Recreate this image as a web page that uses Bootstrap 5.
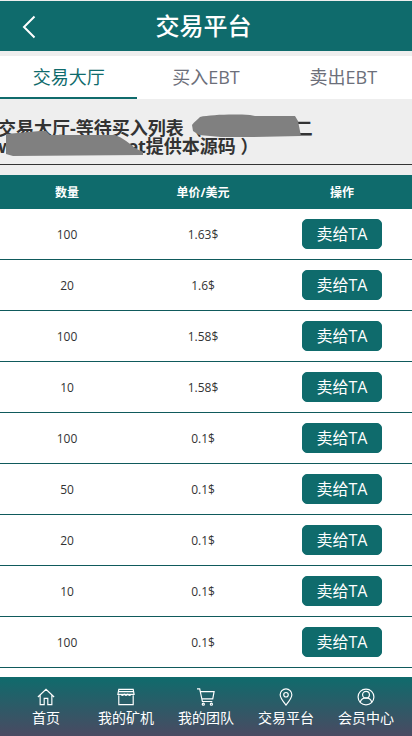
<!DOCTYPE html>
<html lang="zh"><head><meta charset="utf-8">
<meta name="viewport" content="width=device-width, initial-scale=1">
<link href="https://cdn.jsdelivr.net/npm/bootstrap@5.3.0/dist/css/bootstrap.min.css" rel="stylesheet">
<style>
html,body{height:736px;overflow:hidden}
body{font-family:"Open Sans","Noto Sans CJK SC",sans-serif;background:#eee;color:#333;padding-top:1px}
.topbar{height:50px;background:#0f6b6c;color:#fff;position:relative}
.topbar h1{font-size:24px;font-weight:500;margin:0;line-height:50px;text-align:center;padding-right:5px}
.backicon{position:absolute;left:22px;top:14px;width:14px;height:24px}
.tabbar{margin-top:5px;height:43px;background:#fff}
.tabitem{flex:1 1 0;text-align:center;font-size:18px;line-height:43px;color:#6c6f7a;height:43px;border-bottom:2px solid transparent}
.tabitem.on{color:#0f6b6c;border-bottom-color:#0f6b6c}
.notice{height:66px;border-bottom:1px solid #333;position:relative;overflow:hidden;padding-top:20px}
.notice p{font-size:18px;font-weight:700;line-height:18px;margin:0;color:#333;white-space:nowrap;margin-left:-2px}
.veil1{display:inline-block;width:93px}
.veil2{display:inline-block;width:114px}
.blob{position:absolute;left:0;top:0;width:412px;height:65px}
.tradegrid{margin-top:10px;margin-bottom:0;--bs-table-bg:transparent;background:#fff;table-layout:fixed;border-collapse:separate;border-spacing:0}
.tradegrid th{background:#0f6b6c;color:#fff;font-size:12px;font-weight:700;height:34px;padding:2px 0 0;vertical-align:middle;border:0;text-align:center}
.tradegrid th:nth-child(1){width:134px}
.tradegrid th:nth-child(2){width:138px}
.tradegrid td{height:51px;padding:2px 0 0;vertical-align:middle;text-align:center;font-size:12px;color:#333;border-bottom:1px solid #0f5a5c;background:#fff}
.tradegrid td:last-child{padding:0}
.sellbtn{--bs-btn-bg:#0f6b6c;--bs-btn-color:#fff;--bs-btn-border-color:#0f6b6c;--bs-btn-hover-bg:#0f6b6c;--bs-btn-hover-color:#fff;display:block;margin:0 auto;width:80px;height:30px;padding:0;font-size:16px;line-height:26px;border-radius:5px}
.gapfill{height:10px;background:#fff}
.dock{position:fixed;left:0;right:0;bottom:0;height:59px;background:linear-gradient(#0f6b6c,#4a4a62);color:#fff}
.dockitem{flex:0 0 80px;text-align:center;font-size:14px;line-height:17px;padding-top:11px}
.dockitem svg{display:block;margin:0 auto 3px;width:18px;height:18px}
.dockrow{padding-left:6px}
</style></head><body>
<header class="topbar">
<svg class="backicon" viewBox="0 0 14 24" fill="none" stroke="#fff" stroke-width="2"><path d="M12.5 1.500 2 12l10.500 10.500"/></svg>
<h1>交易平台</h1>
</header>
<nav class="tabbar d-flex">
<div class="tabitem on">交易大厅</div><div class="tabitem">买入EBT</div><div class="tabitem">卖出EBT</div>
</nav>
<section class="notice">
<p>交易大厅-等待买入列表（<span class="veil1"></span>二<br>w<span class="veil2"></span>et提供本源码 ）</p>
<svg class="blob" viewBox="0 0 412 65" fill="#808080"><path d="M192 26c2-3 6-6 8-8 10-2 30-3 50-2l5 1 40 0 3 5 3 15-50 1-30 0-22-2-6-4zM6 35l34-3 6 0 4 4 65 0c8 3 14 8 20 13l8 4v3l-130 1-7-2z"/></svg>
</section>
<table class="table tradegrid">
<thead><tr><th>数量</th><th>单价/美元</th><th>操作</th></tr></thead>
<tbody>
<tr><td>100</td><td>1.63$</td><td><button class="btn sellbtn">卖给TA</button></td></tr>
<tr><td>20</td><td>1.6$</td><td><button class="btn sellbtn">卖给TA</button></td></tr>
<tr><td>100</td><td>1.58$</td><td><button class="btn sellbtn">卖给TA</button></td></tr>
<tr><td>10</td><td>1.58$</td><td><button class="btn sellbtn">卖给TA</button></td></tr>
<tr><td>100</td><td>0.1$</td><td><button class="btn sellbtn">卖给TA</button></td></tr>
<tr><td>50</td><td>0.1$</td><td><button class="btn sellbtn">卖给TA</button></td></tr>
<tr><td>20</td><td>0.1$</td><td><button class="btn sellbtn">卖给TA</button></td></tr>
<tr><td>10</td><td>0.1$</td><td><button class="btn sellbtn">卖给TA</button></td></tr>
<tr><td>100</td><td>0.1$</td><td><button class="btn sellbtn">卖给TA</button></td></tr>
</tbody></table>
<div class="gapfill"></div>
<footer class="dock d-flex dockrow">
<div class="dockitem"><svg viewBox="0 0 20 20" fill="none" stroke="#fff" stroke-width="1.300"><path d="M1 10 10 1.500 19 10M3.500 8v10.500h4.500v-7h4v7h4.500V8"/></svg>首页</div>
<div class="dockitem"><svg viewBox="0 0 20 20" fill="none" stroke="#fff" stroke-width="1.300"><path d="M2 8v10.500h16V8M2 1.500h16l1 5.500H1z"/><path d="M2 4h16M4 7c1 1.500 3 1.500 4 0 1 1.500 3 1.500 4 0 1 1.500 3 1.500 4 0"/></svg>我的矿机</div>
<div class="dockitem"><svg viewBox="0 0 20 20" fill="none" stroke="#fff" stroke-width="1.300"><path d="M0 1h3l3 14h11M4 4h15l-1.500 8H5.500"/><circle cx="7" cy="18" r="1.200"/><circle cx="16" cy="18" r="1.200"/></svg>我的团队</div>
<div class="dockitem"><svg viewBox="0 0 20 20" fill="none" stroke="#fff" stroke-width="1.300"><path d="M10 19C6 14 3.500 11 3.500 7.500a6.500 6.500 0 0 1 13 0C16.500 11 14 14 10 19z"/><circle cx="10" cy="7.500" r="2.500"/></svg>交易平台</div>
<div class="dockitem"><svg viewBox="0 0 20 20" fill="none" stroke="#fff" stroke-width="1.300"><circle cx="10" cy="10" r="8.800"/><circle cx="10" cy="7.500" r="3.800"/><path d="M3.500 16c1-3.500 3.500-5 6.500-5s5.500 1.500 6.500 5"/></svg>会员中心</div>
</footer>
<script src="https://cdn.jsdelivr.net/npm/bootstrap@5.3.0/dist/js/bootstrap.bundle.min.js"></script>
</body></html>
